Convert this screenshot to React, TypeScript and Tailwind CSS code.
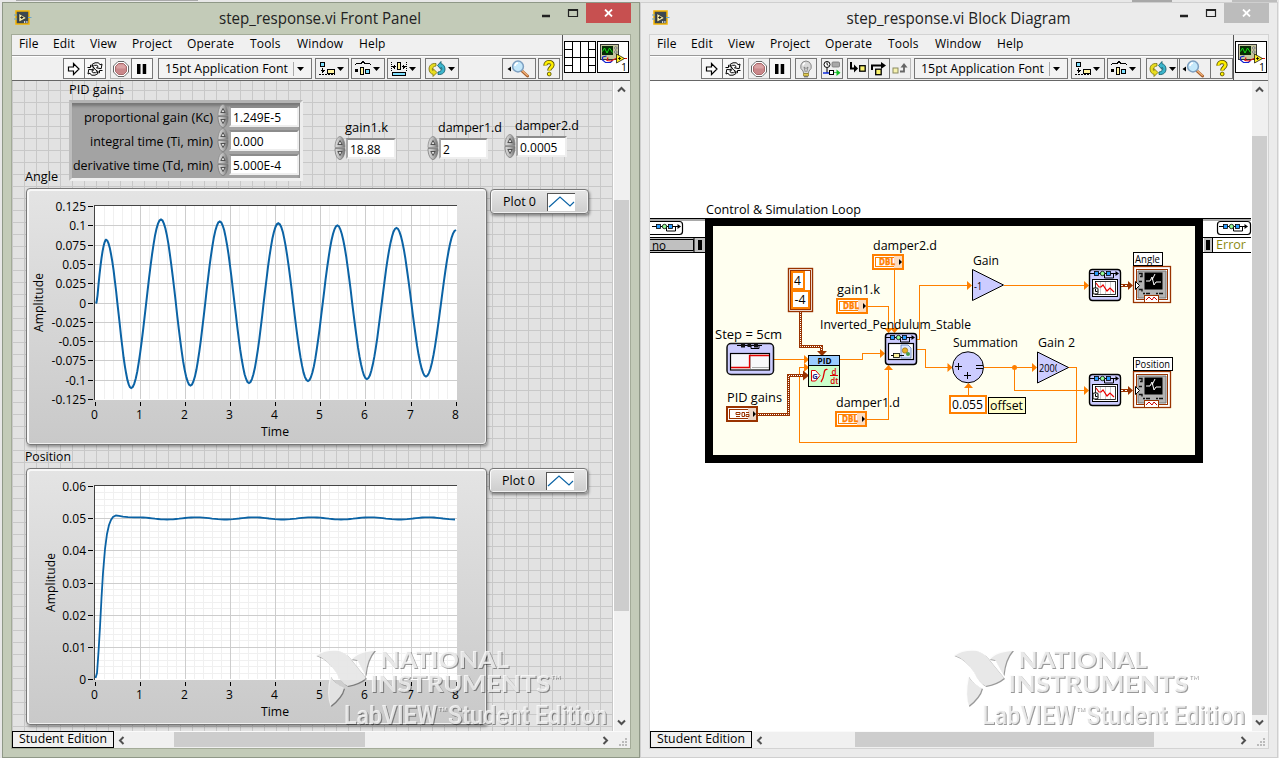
import React from "react";

type P = { children?: React.ReactNode };

function Label({ x, y, w, size = 12, fill = "#000", bold = false, children }: { x: number; y: number; w?: number; size?: number; fill?: string; bold?: boolean; children: string }) {
  return (
    <text x={x} y={y} fontSize={size} fill={fill} fontWeight={bold ? 700 : 400} textLength={w} lengthAdjust="spacingAndGlyphs">
      {children}
    </text>
  );
}

/* ---------- toolbar icons ---------- */

const RunIcon = () => (
  <svg width="14" height="14" viewBox="0 0 14 14">
    <path d="M1.500 5h5V1.500L12 7l-5.500 5.500V9h-5z" fill="#fff" stroke="#000" strokeWidth="1.200" />
  </svg>
);

const RunContIcon = () => (
  <svg width="18" height="14" viewBox="0 0 18 14" className="shrink-0">
    <path d="M6 2.500 9 .8h3.500l1.500 2 2-.8-.8 4.700-4.700-.9 1.700-1.300-1.400-1.200H8.500L7 4.300z" fill="#fff" stroke="#000" />
    <path d="M12 11.500 9 13.200H5.500l-1.500-2-2 .8.8-4.700 4.700.9-1.700 1.300 1.400 1.200h2.300L11 9.700z" fill="#fff" stroke="#000" />
    <path d="M1.500 5.500h3V3.200L9 6.700 5.500 7.500M16.500 8.500h-3v2.300L9 7.300" fill="none" stroke="#000" />
  </svg>
);

const AbortIcon = () => (
  <svg width="16" height="16" viewBox="0 0 16 16" className="shrink-0">
    <path d="M5 .5h6L15.500 5v6L11 15.500H5L.5 11V5z" fill="#fff" stroke="#666" />
    <path d="M5.500 2.500h5l3 3v5l-3 3h-5l-3-3v-5z" fill="#c9878a" stroke="#a86a6c" />
    <path d="M5.500 3.500h5l2 2v2h-9v-2z" fill="#dba3a4" />
  </svg>
);

const PauseIcon = () => (
  <svg width="12" height="12" viewBox="0 0 12 12">
    <path d="M1 1h3.500v10H1zM6.700 1h3.500v10H6.700z" fill="#000" />
  </svg>
);

const Caret = () => (
  <svg width="7" height="4" viewBox="0 0 7 4" className="shrink-0">
    <path d="M0 0h7L3.500 4z" fill="#000" />
  </svg>
);

const AlignIcon = () => (
  <svg width="16" height="15" viewBox="0 0 16 15" shapeRendering="crispEdges" className="shrink-0">
    <rect x="1.500" y="1.500" width="4" height="4" fill="#7fe0ff" stroke="#000" />
    <path d="M3.500 7v5M1.500 9.500h4M2.500 10.500h2" stroke="#000" />
    <path d="M0 13.500h16" stroke="#000" strokeDasharray="2 1" />
    <rect x="8.500" y="8.500" width="7" height="4" fill="#fff3a0" stroke="#000" />
  </svg>
);

const DistributeIcon = () => (
  <svg width="16" height="15" viewBox="0 0 16 15" shapeRendering="crispEdges" className="shrink-0">
    <path d="M1 2.500h5l2-2 2 2h5M0.500 4V2.500M15.500 4V2.500" fill="none" stroke="#000" />
    <rect x="0" y="8" width="3" height="3" fill="#000" />
    <rect x="5.500" y="6.500" width="3" height="7" fill="#fff3a0" stroke="#000" />
    <rect x="10.500" y="8.500" width="4" height="4" fill="#7fe0ff" stroke="#000" />
  </svg>
);

const ResizeIcon = () => (
  <svg width="16" height="15" viewBox="0 0 16 15" shapeRendering="crispEdges" className="shrink-0">
    <path d="M.5 1v10M15.500 1v10" stroke="#000" strokeDasharray="1 1" />
    <path d="M1 5.500h4M11 5.500h4M2.500 4.500v2M3.500 3.500v4M13.500 4.500v2M12.500 3.500v4" stroke="#000" />
    <rect x="6.500" y="1.500" width="3" height="7" fill="#fff3a0" stroke="#000" />
    <rect x="1.500" y="11.500" width="13" height="3" fill="#7fe0ff" stroke="#000" />
  </svg>
);

const ReorderIcon = () => (
  <svg width="18" height="16" viewBox="0 0 18 16" className="-ml-[1px] shrink-0">
    <path d="M8 2.500C3 2 1 5 1 8s2 5 4 5.300V15.500l4-4-4-4v2.200C3.800 9 4 5.500 8 5z" fill="#e8dc20" stroke="#77700a" strokeWidth=".8" />
    <path d="M10 13.500c5 .5 7-2.500 7-5.500s-2-5-4-5.300V.5L9.500 4.500l3.500 4V6.300c1.500.7 1 4.200-3 4.700z" fill="#3cb5cc" stroke="#0b5566" strokeWidth=".8" />
  </svg>
);

const SearchIcon = () => (
  <svg width="23" height="18" viewBox="0 0 23 18" className="-ml-[2px]">
    <path d="M4 6.500v5L.5 9z" fill="#000" />
    <path d="M14.500 10.500 20.500 16" stroke="#a8602c" strokeWidth="3" strokeLinecap="round" />
    <path d="M14.500 10 20.300 15.300" stroke="#f2b27a" strokeWidth="1.300" strokeLinecap="round" />
    <circle cx="11" cy="6.500" r="5.400" fill="#c4e8fb" stroke="#7d9fc0" strokeWidth="1.500" />
    <path d="M8 6a3.200 3.200 0 0 1 3-3" stroke="#fff" strokeWidth="1.600" fill="none" />
  </svg>
);

const HelpIcon = () => (
  <svg width="14" height="17" viewBox="0 0 14 17">
    <path d="M3.500 5.500C3 1 10.800 1 10.500 5c-.3 2.500-3.300 2.800-3.300 5.500" fill="none" stroke="#5c5500" strokeWidth="4.200" />
    <path d="M3.500 5.500C3 1 10.800 1 10.500 5c-.3 2.500-3.300 2.800-3.300 5.500" fill="none" stroke="#fff000" strokeWidth="2.400" />
    <circle cx="7.200" cy="14" r="1.900" fill="#fff000" stroke="#5c5500" strokeWidth=".9" />
  </svg>
);

const BulbIcon = () => (
  <svg width="16" height="18" viewBox="0 0 16 18">
    <path d="M8 1a5.500 5.500 0 0 0-3 10l.7 2.500h4.600L11 11A5.500 5.500 0 0 0 8 1z" fill="#d8d8d8" stroke="#888" />
    <path d="M6 7l1.300 5M10 7l-1.300 5M6 7l2 1.500L10 7" fill="none" stroke="#777" strokeWidth=".8" />
    <path d="M5 5.500A3 3 0 0 1 7 3" stroke="#fff" strokeWidth="1.500" fill="none" />
    <path d="M5.500 13.500h5v2.500h-5z" fill="#e2cb54" stroke="#8a7a20" strokeWidth=".7" />
    <path d="M6 16.800h4" stroke="#555" />
  </svg>
);

const RetainIcon = () => (
  <svg width="18" height="17" viewBox="0 0 18 17" className="shrink-0">
    <circle cx="4" cy="4.500" r="3" fill="#fff" stroke="#000" />
    <path d="M4 2.500v2l1.300.8M4 8v5" stroke="#000" fill="none" />
    <rect x="9" y="2" width="7.500" height="5" rx="1" fill="#a9a9a9" stroke="#777" strokeWidth=".8" />
    <path d="M0 13h7" stroke="#0020e0" strokeWidth="1.400" />
    <rect x="6.500" y="10.500" width="4" height="4" fill="#fff" stroke="#000" />
    <path d="M11 12.300h2.500V9.500l4 3.200-4 3.300V13H11z" fill="#0fbf20" />
  </svg>
);

const StepIntoIcon = () => (
  <svg width="18" height="13" viewBox="0 0 18 13" className="shrink-0">
    <path d="M2 0v6.500h4" stroke="#000" strokeWidth="2" fill="none" />
    <path d="M5 2.500v8L9 6.500z" fill="#000" />
    <rect x="10.700" y="3.700" width="5.500" height="5.500" fill="#fbf36e" stroke="#000" strokeWidth="1.300" />
  </svg>
);
const StepOverIcon = () => (
  <svg width="16" height="14" viewBox="0 0 16 14">
    <path d="M1 8V3.500h10" stroke="#000" strokeWidth="2" fill="none" />
    <path d="M10 0v7l5-3.500z" fill="#000" />
    <rect x="4.700" y="7.200" width="5.500" height="5.500" fill="#fbf36e" stroke="#000" strokeWidth="1.300" />
  </svg>
);
const StepOutIcon = () => (
  <svg width="16" height="13" viewBox="0 0 16 13">
    <rect x="1" y="6" width="5" height="5" fill="#f6f2b0" stroke="#8a8a60" />
    <path d="M8 9.500h4V5" stroke="#666" strokeWidth="1.800" fill="none" />
    <path d="M8.500 5.500h7L12 1z" fill="#666" />
  </svg>
);

const AppIcon = () => (
  <svg width="18" height="16" viewBox="0 0 18 16" className="shrink-0">
    <rect x="2" y="1" width="13" height="13" fill="#3d4850" stroke="#f5b400" strokeWidth="1.500" />
    <path d="M0 5h3M0 9h3M14 7.500h3.500" stroke="#6aa7c8" />
    <path d="M5 3.500v8.500l7.500-4z" fill="#f7efb0" stroke="#222" strokeWidth=".6" />
    <path d="M6.300 7.500h3M7.800 6v3" stroke="#222" />
    <path d="M10 12h1.200M12.300 12h1.200" stroke="#fff" strokeWidth="1.500" />
  </svg>
);

const ConnectorPane = () => (
  <svg width="32" height="32" viewBox="0 0 32 32" shapeRendering="crispEdges">
    <rect x=".5" y=".5" width="31" height="31" fill="#fff" stroke="#000" />
    <path d="M8.500 0v32M16.500 0v32M24.500 0v32M0 8.500h8M24 8.500h8M0 16.500h32M0 24.500h8M24 24.500h8" stroke="#000" />
  </svg>
);

const ViIcon = () => (
  <svg width="32" height="32" viewBox="0 0 32 32">
    <rect x=".5" y=".5" width="31" height="31" fill="#fff" stroke="#000" />
    <rect x="3.500" y="3.500" width="18" height="15" fill="#c6c6a0" stroke="#333" />
    <rect x="5" y="5" width="11" height="9" fill="#062b06" />
    <path d="M5.500 10.500 7.500 7l2.500 5L12.500 7l3 4.500" stroke="#15e015" fill="none" />
    <circle cx="18.800" cy="7" r="1.200" fill="#eee" stroke="#333" strokeWidth=".6" />
    <circle cx="18.800" cy="11" r="1.200" fill="#eee" stroke="#333" strokeWidth=".6" />
    <path d="M5.500 16v3l3 2.500h5l2-2M5.500 16l4-1" stroke="#1020d0" fill="none" strokeWidth="1.200" />
    <path d="M11 16.500l-1 3 4 .5 5-2.500h11" stroke="#e01010" fill="none" strokeWidth="1.200" />
    <path d="M19.500 13v9l8-4.500z" fill="#ffee22" stroke="#000" strokeWidth=".7" />
    <path d="M21 17.500h3M22.500 16v3" stroke="#000" strokeWidth=".8" />
    <text x="24" y="29.500" fontSize="10.500">1</text>
  </svg>
);

/* ---------- window chrome ---------- */

const btn = "flex h-[21px] shrink-0 items-center justify-center border border-[#777]";

function FontBox() {
  return (
    <div className="flex h-[21px] w-[154px] shrink-0 items-center border border-[#777] bg-[#f3f3f3]">
      <svg width="134" height="19" className="shrink-0">
        <Label x={6} y={13.5} w={123}>15pt Application Font</Label>
      </svg>
      <div className="h-[14px] w-[4px] border-l border-[#aaa]" />
      <Caret />
    </div>
  );
}

function DropBtn({ children, cls = "" }: P & { cls?: string }) {
  return <div className={`flex h-[21px] w-[34px] shrink-0 items-center gap-[2px] border border-[#777] pl-[3px] ${cls}`}>{children}<Caret /></div>;
}

function RunGroup({ cls }: { cls: string }) {
  return (
    <>
      <div className={`${btn} w-[22px] bg-[#f8f8f8] ${cls}`}><RunIcon /></div>
      <div className={`${btn} -ml-px w-[22px] bg-[#f8f8f8]`}><RunContIcon /></div>
      <div className="ml-[4px] flex h-[21px] w-[22px] shrink-0 items-center justify-center border border-r-0 border-[#b5b5b5] pr-[2px]"><AbortIcon /></div>
      <div className={`${btn} -ml-px w-[22px] bg-[#f8f8f8]`}><PauseIcon /></div>
    </>
  );
}

function Menu() {
  return (
    <div className="flex h-[20px] pl-[7px] text-[12px] leading-[18px] tracking-[0.15px]">
      <span className="w-[34px]">File</span>
      <span className="w-[37px]">Edit</span>
      <span className="w-[42px]">View</span>
      <span className="w-[55px]">Project</span>
      <span className="w-[63px]">Operate</span>
      <span className="w-[47px]">Tools</span>
      <span className="w-[62px]">Window</span>
      <span>Help</span>
    </div>
  );
}

function Chevron({ d }: { d: string }) {
  return <svg width="9" height="9" viewBox="0 0 9 9"><path d={d} fill="none" stroke="#505050" strokeWidth="2" /></svg>;
}

type WinProps = {
  title: string; titleW: number; active: boolean; toolbar: React.ReactNode; icons: React.ReactNode; iconCls: string;
  vTop: string; hPos: string; children: React.ReactNode;
};

function Win({ title, titleW, active, toolbar, icons, iconCls, vTop, hPos, children }: WinProps) {
  return (
    <section className={`h-[756px] w-[638px] shrink-0 border ${active ? "border-[#8f9887] bg-[#c3cbb8]" : "border-[#cfcfcf] bg-[#ebebeb]"}`}>
      <header className="flex h-[31px] pl-[11px]">
        <div className="mt-[7px]"><AppIcon /></div>
        <svg width="478" height="31" className="shrink-0">
          <text x={active ? 288 : 288.5} y="21" textAnchor="middle" fontSize="15.500" fill="#222" textLength={titleW} lengthAdjust="spacingAndGlyphs">{title}</text>
        </svg>
        <svg width="76" height="20" className="-ml-[2px] shrink-0">
          <path d="M34 13h8" stroke="#222" strokeWidth="2.500" />
          <path d="M60.500 6.500h9v7h-9z M60 7.500h10" fill="none" stroke="#222" strokeWidth="1.200" />
        </svg>
        <div className={`ml-[2px] flex h-[20px] w-[45px] items-center justify-center ${active ? "bg-[#c75050]" : "bg-[#bcbcbc]"}`}>
          <svg width="9" height="8" viewBox="0 0 9 8"><path d="M1 .5l7 7M8 .5l-7 7" stroke="#fff" strokeWidth="1.800" /></svg>
        </div>
      </header>
      <div className={`ml-[8px] flex h-[715px] w-[620px] flex-col border bg-[#f0f0f0] ${active ? "border-[#a3ab98]" : "border-[#d3d3d3]"}`}>
        <div className="flex h-[46px] border-b border-[#666]">
          <div className="flex min-w-0 flex-1 flex-col">
            <Menu />
            <div className="h-[2px] border-t border-[#999] bg-white" />
            <div className="flex h-[23px] items-center">{toolbar}</div>
          </div>
          <div className={`flex shrink-0 items-start border-l border-[#555] pt-[6px] ${iconCls}`}>{icons}</div>
        </div>
        <div className="flex h-[650px]">
          {children}
          <div className="relative flex w-[16px] flex-col items-center justify-between bg-[#f0f0f0] py-[4px] pr-[2px]">
            <Chevron d="M1 6.500l3.500-3.500L8 6.500" />
            <div className={`absolute left-0 w-[15px] bg-[#cdcdcd] ${vTop}`} />
            <Chevron d="M1 2.500l3.500 3.500L8 2.500" />
          </div>
        </div>
        <div className="flex h-[17px] border-t border-[#fafafa]">
          <div className="-mt-px flex h-[17px] w-[102px] items-center border border-black">
            <svg width="100" height="15" className="overflow-visible"><Label x={6} y={11} w={88}>Student Edition</Label></svg>
          </div>
          <div className="relative flex flex-1 items-center justify-between pl-[3px] pr-[20px]">
            <Chevron d="M6.500 1L3 4.500 6.500 8" />
            <div className={`absolute top-0 h-[15px] bg-[#cdcdcd] ${hPos}`} />
            <Chevron d="M2.500 1L6 4.500 2.500 8" />
            <svg width="9" height="9" className="absolute bottom-[1px] right-[2px]">
              <path d="M6 0h2v2H6zM3 3h2v2H3zM6 3h2v2H6zM0 6h2v2H0zM3 6h2v2H3zM6 6h2v2H6z" fill="#bbb" />
            </svg>
          </div>
        </div>
      </div>
    </section>
  );
}

/* ---------- watermark ---------- */

function Watermark({ cls }: { cls: string }) {
  return (
    <svg width="298" height="86" viewBox="316 645 298 86" className={`absolute drop-shadow-[1px_1.5px_0.7px_rgba(0,0,0,0.5)] ${cls}`}>
      <g fill="#fbfbfb" fillOpacity=".8">
        <path d="M316.500 655Q324 649 339 650Q348 653 354 662L367 678Q360 684 348.500 686Q341 682 336 671Q328 659 316.500 655Z" />
        <path d="M331 676Q336 684 345 688Q343 697 331.500 706Q327 695 331 676Z" />
        <path d="M352 659Q357 651 376 650Q368 659 366.500 675Q361 666 358 660Z" />
        <text x="381" y="668" fontSize="23.500" fontWeight="900" fontFamily="Lato" textLength="129" lengthAdjust="spacingAndGlyphs">NATIONAL</text>
        <text x="371" y="692" fontSize="23.500" fontWeight="900" fontFamily="Lato" textLength="180" lengthAdjust="spacingAndGlyphs">INSTRUMENTS</text>
        <text x="552" y="679" fontSize="6" fontFamily="Lato">TM</text>
        <text x="345" y="724" fontSize="25" fontWeight="600" fontFamily="Roboto" textLength="93" lengthAdjust="spacingAndGlyphs">LabVIEW</text>
        <text x="439" y="711" fontSize="6" fontFamily="Roboto">TM</text>
        <text x="449" y="724" fontSize="25" fontWeight="600" fontFamily="Roboto" textLength="159" lengthAdjust="spacingAndGlyphs">Student Edition</text>
      </g>
    </svg>
  );
}

/* ---------- front panel ---------- */

const X = (t: number) => Math.floor(95.3 + 45.1 * t) + 0.5;

const extrema: [number, number][] = [
  [106, 239.8], [131.2, 388], [161, 219.5], [190.5, 385.5], [219.8, 221.5], [249, 383], [278.3, 223.3], [308, 381],
  [337.4, 225.5], [366.9, 379], [396.5, 228], [426, 376.5], [456, 230],
];

function wave() {
  const pts = ["95.5,303", "96.5,302.5"];
  for (let x = 97.5; x < 106; x += 1) {
    const u = (x - 97) / 9;
    pts.push(`${x},${(301.5 - 61.7 * (1 - Math.pow(1 - u, 1.75))).toFixed(1)}`);
  }
  for (let i = 0; i < extrema.length - 1; i++) {
    const [x0, y0] = extrema[i];
    const [x1, y1] = extrema[i + 1];
    for (let k = 0; k < 20; k++) {
      const u = k / 20;
      pts.push(`${(x0 + (x1 - x0) * u).toFixed(1)},${(y0 + ((y1 - y0) * (1 - Math.cos(Math.PI * u))) / 2).toFixed(1)}`);
    }
  }
  pts.push("456,230");
  return pts.join(" ");
}

function settle() {
  const pts = ["95.5,678", "97,673", "98.5,652", "100,627", "101.5,598", "103,573", "105,549", "107,534", "109,525", "111,520", "113,517", "116,515.5", "119,515.8", "123,516.7", "128,517.2"];
  for (let x = 134; x <= 456; x += 3) {
    pts.push(`${x},${(518.4 - 1.1 * Math.cos(((x - 138) / 58) * 2 * Math.PI)).toFixed(1)}`);
  }
  return pts.join(" ");
}

function Graph({ top, h, plotTop, plotBottom, labels, minor, points, ampX, cls }: {
  top: number; h: number; plotTop: number; plotBottom: number; labels: string[]; minor: boolean; points: string; ampX: number; cls: string;
}) {
  const n = labels.length - 1;
  const Y = (i: number) => Math.round(plotTop + ((plotBottom - plotTop) * i) / n) + 0.5;
  const mid = (plotTop + plotBottom) / 2;
  const xs = [0, 1, 2, 3, 4, 5, 6, 7, 8];
  const minorY: number[] = [];
  if (minor) for (let i = 0; i < n * 5; i++) if (i % 5) minorY.push(plotTop + ((plotBottom - plotTop) * i) / (n * 5));
  return (
    <div className={`absolute left-[14px] w-[461px] rounded-[4px] border border-[#777] bg-linear-to-b from-[#e4e4e4] to-[#c9c9c9] shadow-[inset_1px_1px_0_1px_#f8f8f8,inset_-1px_-1px_0_0_#f0f0f0,1px_2px_3px_rgba(0,0,0,.35)] ${cls}`}>
      <svg width="459" height={h - 2} viewBox={`27 ${top + 1} 459 ${h - 2}`}>
        <rect x="95" y={plotTop} width="362" height={plotBottom - plotTop + 1} fill="#fff" />
        <g shapeRendering="crispEdges">
          {xs.slice(0, 8).flatMap((t) => [0.2, 0.4, 0.6, 0.8].map((d) => <path key={t + d} d={`M${X(t + d)} ${plotTop}V${plotBottom}`} stroke="#f0f0f0" />))}
          {minorY.map((y) => <path key={y} d={`M95 ${Math.round(y) + 0.5}H457`} stroke="#f0f0f0" />)}
          {xs.slice(1, 8).map((t) => <path key={t} d={`M${X(t)} ${plotTop}V${plotBottom}`} stroke="#cdcdcd" />)}
          {labels.slice(1, n).map((l, i) => <path key={l} d={`M95 ${Y(i + 1)}H457`} stroke="#cdcdcd" />)}
          <path d={`M94.500 ${plotBottom + 1}V${plotTop - 0.5}H457`} stroke="#444" fill="none" />
          {labels.map((l, i) => <path key={l} d={`M88 ${Y(i)}H93`} stroke="#000" />)}
          {xs.map((t) => <path key={t} d={`M${X(t)} ${plotBottom + 3}V${plotBottom + 7}`} stroke="#000" />)}
        </g>
        {labels.map((l, i) => <text key={l} x="86" y={Y(i) + 4} fontSize="12" textAnchor="end">{l}</text>)}
        {xs.map((t) => <text key={t} x={X(t) - 1} y={plotBottom + 20} fontSize="12" textAnchor="middle">{t}</text>)}
        <Label x={261} y={plotBottom + 37} w={28}>Time</Label>
        <text transform={`translate(${ampX} ${mid}) rotate(-90)`} fontSize="12" textAnchor="middle" textLength="59">Amplitude</text>
        <polyline points={points} fill="none" stroke="#0b63a5" strokeWidth={minor ? 1.8 : 2} />
      </svg>
    </div>
  );
}

function Legend({ cls }: { cls: string }) {
  return (
    <div className={`absolute flex h-[25px] w-[99px] items-center rounded-[4px] border border-[#777] bg-linear-to-b from-[#e6e6e6] to-[#cdcdcd] pl-[12px] text-[12px] shadow-[inset_1px_1px_0_0_#fafafa,inset_-1px_-1px_0_0_#f0f0f0,1px_2px_3px_rgba(0,0,0,.4)] ${cls}`}>
      <svg width="44" height="18" className="overflow-visible"><Label x={0} y={12.5} w={33}>Plot 0</Label></svg>
      <svg width="28" height="18" className="border-l border-t border-[#555] bg-white">
        <path d="M1 13L12 3l10 9 4-4" fill="none" stroke="#0b63a5" strokeWidth="1.200" />
      </svg>
    </div>
  );
}

function Spinner() {
  return (
    <svg width="12" height="24" viewBox="0 0 12 24" className="shrink-0">
      <defs>
        <linearGradient id="knob" x1="0" x2="1"><stop offset="0" stopColor="#dedede" /><stop offset=".5" stopColor="#b8b8b8" /><stop offset="1" stopColor="#6c6c6c" /></linearGradient>
      </defs>
      <path d="M1 11.500C1 5 3.500.5 6 .5s5 4.500 5 11z" fill="url(#knob)" stroke="#8a8a8a" strokeWidth=".8" />
      <path d="M1 12.500C1 19 3.500 23.500 6 23.500s5-4.500 5-11z" fill="url(#knob)" stroke="#777" strokeWidth=".8" />
      <path d="M3.800 8.500L6 4.500l2.200 4zM3.800 15.500l2.200 4 2.200-4z" fill="#ddd" stroke="#444" strokeWidth=".9" />
    </svg>
  );
}

function Numeric({ value, cls, w }: { value: string; cls: string; w: string }) {
  return (
    <div className={`absolute flex items-center ${cls}`}>
      <Spinner />
      <div className={`mt-px flex h-[21px] items-center border-2 border-b-[#eee] border-l-[#a8a8a8] border-r-[#eee] border-t-[#8c8c8c] bg-white pl-[2px] text-[12px] leading-[14px] ${w}`}>
        <span className="relative top-px">{value}</span>
      </div>
    </div>
  );
}

function FrontPanel() {
  return (
    <div className="relative h-[650px] w-[602px] overflow-hidden border-r border-white bg-[#e2e2e2] bg-[linear-gradient(to_right,#c8c8c8_1px,transparent_1px),linear-gradient(to_bottom,#c8c8c8_1px,transparent_1px)] bg-[length:12px_12px] bg-[position:0_9px]">
      <div className="absolute left-[57px] top-[19px] h-[81px] w-[234px] border-[3px] border-b-[#efefef] border-l-[#bdbdbd] border-r-[#ededed] border-t-[#b4b4b4] bg-[#a3a3a3] shadow-[inset_-1px_4px_3px_-1px_#777]" />
      <Numeric value="1.249E-5" cls="left-[205px] top-[23px]" w="w-[70px]" />
      <Numeric value="0.000" cls="left-[205px] top-[47px]" w="w-[70px]" />
      <Numeric value="5.000E-4" cls="left-[205px] top-[71px]" w="w-[70px]" />
      <Numeric value="18.88" cls="left-[322px] top-[55px]" w="w-[50px]" />
      <Numeric value="2" cls="left-[415px] top-[55px]" w="w-[49px]" />
      <Numeric value="0.0005" cls="left-[492px] top-[53px]" w="w-[51px]" />
      <svg width="602" height="400" viewBox="12 81 602 400" className="absolute left-0 top-0">
        <Label x={69} y={94} w={55}>PID gains</Label>
        <Label x={84} y={122} w={129}>proportional gain (Kc)</Label>
        <Label x={90} y={146} w={123}>integral time (Ti, min)</Label>
        <Label x={73} y={170} w={140}>derivative time (Td, min)</Label>
        <Label x={345} y={132} w={43}>gain1.k</Label>
        <Label x={438} y={132} w={64}>damper1.d</Label>
        <Label x={515} y={130} w={64}>damper2.d</Label>
        <Label x={25} y={181} w={33}>Angle</Label>
        <Label x={25} y={461} w={46}>Position</Label>
      </svg>
      <Graph top={188} h={257} plotTop={206} plotBottom={399} minor={false} points={wave()} ampX={43} cls="top-[107px] h-[257px]"
        labels={["0.125", "0.1", "0.075", "0.05", "0.025", "0", "-0.025", "-0.05", "-0.075", "-0.1", "-0.125"]} />
      <Graph top={468} h={257} plotTop={486} plotBottom={679} minor points={settle()} ampX={55} cls="top-[387px] h-[257px]"
        labels={["0.06", "0.05", "0.04", "0.03", "0.02", "0.01", "0"]} />
      <Legend cls="left-[478px] top-[108px]" />
      <Legend cls="left-[477px] top-[387px]" />
      <Watermark cls="left-[303px] top-[564px]" />
    </div>
  );
}

/* ---------- block diagram ---------- */

const OR = "#ff8000";
const BR = "#993300";

function Terminal({ x, y }: { x: number; y: number }) {
  return (
    <g>
      <rect x={x + 1} y={y + 1} width="30" height="14" fill="#fff" stroke={OR} strokeWidth="2" />
      <rect x={x + 3.5} y={y + 3.5} width="25" height="9" fill="#fff" stroke={OR} />
      <rect x={x + 22} y={y + 2} width="8" height="12" fill="#fbdcc0" />
      <text x={x + 7} y={y + 11} fontSize="8.500" fontWeight="700" fill={OR} stroke={OR} strokeWidth=".3" textLength="16" lengthAdjust="spacingAndGlyphs" fontFamily="DejaVu Sans">DBL</text>
      <path d={`M${x + 27} ${y + 5}v6l3-3z`} fill="#000" />
    </g>
  );
}

function LoopGlyph({ x, y }: { x: number; y: number }) {
  return (
    <g>
      <path d={`M${x + 1} ${y}h27M${x + 15.5} ${y}v4.500h9v-4.500`} stroke="#000" fill="none" />
      <path d={`M${x + 26.5} ${y - 2.5}v5l3.500-2.500z`} fill="#000" />
      <rect x={x + 5.5} y={y - 2} width="4" height="4" fill="#2b9cff" stroke="#000" strokeWidth=".8" />
      <circle cx={x + 13.5} cy={y} r="2.200" fill="#9f9" stroke="#000" strokeWidth=".8" />
      <rect x={x + 17.5} y={y - 2} width="4" height="4" fill="#2b9cff" stroke="#000" strokeWidth=".8" />
    </g>
  );
}

function Scope({ y }: { y: number }) {
  return (
    <g>
      <rect x="1089.500" y={y + 0.5} width="31" height="31" rx="3" fill="#ccccff" stroke="#000" strokeWidth="1.400" />
      <LoopGlyph x={1089} y={y + 4.5} />
      <rect x="1092.500" y={y + 10.5} width="25" height="17" fill="#fff" stroke="#000" />
      <rect x="1095.500" y={y + 12.5} width="20" height="13" fill="#fff" stroke="#000" strokeWidth=".8" />
      <path d={`M1100.500 ${y + 13}v12M1105.500 ${y + 13}v12M1110.500 ${y + 13}v12`} stroke="#ccc" />
      <path d={`M1096 ${y + 14}l3 4 2 0 2-2 4 6 3-3 4 4`} stroke="#e00" fill="none" strokeWidth="1.200" />
      <rect x="1093" y={y + 19} width="5" height="6" rx="1" fill="#fff" stroke="#000" />
      <path d={`M1095.500 ${y + 20}v2.500h2`} stroke="#000" fill="none" />
      <path d={`M1121 ${y + 16.5}h8`} stroke={BR} strokeWidth="3" />
      <path d={`M1121 ${y + 16.5}h8`} stroke="#fff" strokeDasharray="2 2" />
      <path d={`M1128 ${y + 12}v9l5-4.500z`} fill={BR} />
      <g>
        <rect x="1133.500" y={y - 2.5} width="37" height="36" fill="#fff" stroke={BR} strokeWidth="1.300" />
        <rect x="1136.500" y={y + 0.5} width="31" height="30" fill="#fff" stroke={BR} />
        <path d={`M1138 ${y + 2}h28v27h-28z`} fill="#b4b4b4" stroke="#777" />
        <rect x="1144.500" y={y + 3.5} width="18" height="17" fill="#000" />
        <path d={`M1146 ${y + 12}h4l2-4 2 8 2-3h5M1155 ${y + 5}l-3 6`} stroke="#fff" fill="none" />
        <path d={`M1139 ${y + 4.5}h3v3h-2M1139 ${y + 12.5}h3M1139 ${y + 20.5}h3v2M1143 ${y + 24.5}h2M1146 ${y + 24.5}h4M1156 ${y + 24.5}h2M1159 ${y + 24.5}h4`} stroke="#111" fill="none" strokeWidth="1.400" />
        <path d={`M1135.500 ${y + 12.5}v8l4-4z`} fill="#fff" stroke="#000" />
        <rect x="1144.500" y={y + 26.5} width="14" height="7" fill="#fff" stroke={BR} />
        <path d={`M1146 ${y + 31}l3-3 3 3 2-3 3 3`} stroke="#c00" fill="none" />
      </g>
    </g>
  );
}

function Diagram() {
  return (
    <svg width="602" height="650" viewBox="650 81 602 650">
      <Label x={706} y={214} w={155}>Control &amp; Simulation Loop</Label>
      <rect x="705" y="218" width="498" height="245" fill="#000" />
      <rect x="713" y="226" width="482" height="229" fill="#fffff0" />

      {/* loop edge nodes */}
      <g>
        <path d="M650 218.500h55M1203 218.500h48" stroke="#000" />
        <path d="M650 220h55M1203 220h48" stroke="#a9a9a9" strokeWidth="2" />
        <rect x="640" y="221.500" width="42.500" height="13" rx="3" fill="#fff" stroke="#000" strokeWidth="1.200" />
        <LoopGlyph x={651} y={226.5} />
        <path d="M650 237h55v16h-55z" fill="#c0c0c0" />
        <path d="M650 237.500h55M650 252.500h55M694 238v14" stroke="#000" />
        <path d="M650 239.500h43.500v11h-43.500" fill="none" stroke="#000" />
        <rect x="698" y="240" width="4" height="10" fill="#000" />
        <Label x={652} y={250} w={14}>no</Label>
        <rect x="1217.500" y="221.500" width="33" height="13" rx="3" fill="#fff" stroke="#000" strokeWidth="1.200" />
        <LoopGlyph x={1218} y={226.5} />
        <path d="M1204 237h8v16h-8z" fill="#c0c0c0" />
        <path d="M1203 237.500h48M1203 252.500h48M1212.500 237v16" stroke="#000" />
        <rect x="1206" y="240" width="4" height="10" fill="#000" />
        <Label x={1216} y={249} w={30} fill="#8c8a10">Error</Label>
      </g>

      {/* wires */}
      <g fill="none" stroke={OR} strokeWidth="1" shapeRendering="crispEdges">
        <path d="M774 359.500H804M840 359.500H862.500V353.500H881M917 339.500H919.500V285.500H968M917 349.500H925.500V367.500H948" />
        <path d="M894.500 270V329M868 306.500H888.500V329M867 419.500H888.500V369" />
        <path d="M1004 285.500H1085M984 367.500H1033M1014.500 367.500V390.500H1085M1068 367.500H1076.500V442.500H799.500V367.500H804M968.500 396V388" />
      </g>
      <g fill={OR}>
        <path d="M804 355v9l5-4.500zM804 363v9l5-4.500zM880 349v9l5-4.500zM967 281v9l5-4.500zM947.500 363v9l5-4.500zM1084 281v9l5-4.500zM1084 386v9l5-4.500zM1032 363v9l5-4.500z" />
        <path d="M884 328h9l-4.500 5zM890 328h9l-4.500 5zM884 370h9l-4.500-5zM964 388h9l-4.500-5z" />
        <circle cx="1014.500" cy="367.500" r="2.500" />
      </g>
      <g fill="none">
        <path d="M800.500 312V346.500H821.500V352M758 414.500H788.500V375.500H803" stroke={BR} strokeWidth="3" />
        <path d="M800.500 312V346.500H821.500V352M758 414.500H788.500V375.500H803" stroke="#fff" strokeDasharray="1 1" />
        <path d="M817 351h10l-5 5zM803 370.500v10l6-5z" fill={BR} />
      </g>

      {/* array constant */}
      <rect x="788.500" y="268.500" width="24" height="43" fill="#fff" stroke={BR} strokeWidth="1.400" />
      <rect x="790.500" y="270.500" width="20" height="39" fill="#fff" stroke={BR} />
      <rect x="792" y="272" width="12" height="17" fill="#fff" stroke={OR} strokeWidth="2" />
      <rect x="792" y="291" width="17" height="17" fill="#fff" stroke={OR} strokeWidth="2" />
      <Label x={794} y={285}>4</Label>
      <Label x={794.5} y={304} w={11}>-4</Label>

      {/* step source */}
      <Label x={715} y={339} w={67}>Step = 5cm</Label>
      <rect x="727" y="343.500" width="46.500" height="31" rx="4" fill="#ccccff" stroke="#111" strokeWidth="1.500" />
      <path d="M737 345.500h25M751 346v2.500h8v-2.500" stroke="#000" fill="none" />
      <path d="M741 344h4v3.500h-4zM747.500 344h3.500v3h-3.500zM754 344h4v3.500h-4z" fill="#111" />
      <rect x="730.500" y="353.500" width="39" height="16.500" fill="#f8f8fa" stroke="#000" strokeWidth="1.200" />
      <path d="M750.500 354v15M752 367.500h17" stroke="#aaa" />
      <path d="M731 367.500h18.500V355.500H769" fill="none" stroke="#e00000" strokeWidth="1.300" />

      {/* pid gains terminal */}
      <Label x={727} y={402} w={55}>PID gains</Label>
      <rect x="727" y="407" width="30" height="14" fill="#fff" stroke={BR} strokeWidth="2" />
      <rect x="729.500" y="409.500" width="25" height="9" fill="#fff" stroke={BR} />
      <rect x="748" y="408" width="8" height="12" fill="#ecd6c8" />
      <path d="M736 412.500h4v2h-4zM736 416.500h4M742 412.500h2.500v4h-2.500zM746 414.500h3v2h-3zM746 412.500h3" fill="none" stroke={BR} />
      <path d="M753 411v6l3-3z" fill="#000" />

      {/* pid */}
      <rect x="808.500" y="355.500" width="31" height="31" fill="#ccffcc" stroke="#000" />
      <rect x="809" y="356" width="30" height="9" fill="#99ccff" />
      <path d="M808 365.500h32" stroke="#000" />
      <Label x={817.5} y={364} w={14} size={8.5} bold>PID</Label>
      <path d="M811.500 370.500h4l4.500 5-4.500 5.500h-4z" fill="#fff" stroke="#d00" />
      <text x="812.300" y="378.500" fontSize="7.500" fill="#228" fontWeight="700">G</text>
      <path d="M827.500 369.500q-3-1-3.500 4t-3 8.500" fill="none" stroke="#d00" strokeWidth="1.300" />
      <path d="M830 375.500h8" stroke="#d00" />
      <text x="831.500" y="374.500" fontSize="8" fontWeight="600" fill="#d00">d</text>
      <text x="830.300" y="383.500" fontSize="8" fontWeight="600" fill="#d00">dt</text>

      {/* controls */}
      <Label x={873} y={250} w={64}>damper2.d</Label>
      <Terminal x={872} y={254} />
      <Label x={837} y={294} w={43}>gain1.k</Label>
      <Terminal x={836} y={298} />
      <Label x={836} y={407} w={64}>damper1.d</Label>
      <Terminal x={835} y={411} />

      {/* pendulum model */}
      <rect x="885.500" y="333.500" width="31" height="31" rx="3" fill="#ccccff" stroke="#000" strokeWidth="1.500" />
      <LoopGlyph x={885} y={337.5} />
      <rect x="888.500" y="343.500" width="25" height="16" fill="#fff" stroke="#000" strokeWidth="1.200" />
      <path d="M901 345h7l3 3v10h-10z" fill="#dce9ff" stroke="#5577bb" strokeWidth=".8" />
      <circle cx="905" cy="350.500" r="2.700" fill="#e8b020" stroke="#886010" strokeWidth=".6" />
      <circle cx="908" cy="354" r="2" fill="#48a048" />
      <path d="M891 355.500h13" stroke="#000" />
      <rect x="893.500" y="353.500" width="6" height="4" fill="#fdf5a0" stroke="#000" strokeWidth=".8" />
      <Label x={820} y={329} w={151}>Inverted_Pendulum_Stable</Label>

      {/* gain */}
      <Label x={973} y={265} w={26}>Gain</Label>
      <path d="M972.500 269.500v31l31-15.500z" fill="#ccccff" stroke="#000" />
      <Label x={974} y={289.5} w={8} size={10}>-1</Label>
      <Label x={1038} y={347} w={37}>Gain 2</Label>
      <path d="M1037.500 352v31l31-15.500z" fill="#ccccff" stroke="#000" />
      <svg x="1038" y="355" width="19" height="24">
        <Label x={1} y={16.5} w={21} size={10}>2000</Label>
      </svg>

      {/* summation */}
      <Label x={953} y={347} w={65}>Summation</Label>
      <circle cx="968" cy="367.300" r="15.500" fill="#ccccff" stroke="#000" />
      <path d="M955 366.500h7M958.500 363v7M964 375.500h7M967.500 372v7M976 365.500h7M976 368.500h7" stroke="#000" />
      <rect x="950" y="396" width="36" height="17" fill="#fff" stroke={OR} strokeWidth="2" />
      <Label x={952} y={409} w={31}>0.055</Label>
      <rect x="988.500" y="397.500" width="37" height="16" fill="#ffffcc" stroke="#000" />
      <Label x={990} y={410} w={33}>offset</Label>

      {/* indicators */}
      <Scope y={269} />
      <Scope y={374} />
      <rect x="1133.500" y="252.500" width="29" height="13" fill="#fff" stroke="#000" />
      <Label x={1135} y={263} w={25} size={10}>Angle</Label>
      <rect x="1133.500" y="357.500" width="39" height="13" fill="#fff" stroke="#000" />
      <Label x={1135} y={368} w={35} size={10}>Position</Label>
    </svg>
  );
}

export default function App() {
  return (
    <main className="flex h-[758px] w-[1279px] flex-col overflow-hidden bg-[#e8e8e8] text-black [font-family:'Open_Sans','Noto_Sans',sans-serif]">
      <div className="flex h-[2px] shrink-0">
        <div className="ml-[16px] h-px w-[182px] bg-[#aaa]" />
        <div className="ml-[934px] w-[40px] bg-[#a8a8a8]" />
        <div className="ml-[60px] w-[45px] bg-[#bdbdbd]" />
      </div>
      <div className="flex pl-[2px]">
        <Win
          title="step_response.vi Front Panel" titleW={202} active iconCls="w-[68px] gap-[1px] pl-[1px]"
          vTop="top-[119px] h-[411px]" hPos="left-[60px] w-[191px]"
          icons={<><ConnectorPane /><ViIcon /></>}
          toolbar={
            <>
              <RunGroup cls="ml-[51px]" />
              <div className="w-[5px]" />
              <FontBox />
              <DropBtn cls="ml-[3px]"><AlignIcon /></DropBtn>
              <DropBtn cls="ml-[2px]"><DistributeIcon /></DropBtn>
              <DropBtn cls="ml-[2px]"><ResizeIcon /></DropBtn>
              <DropBtn cls="ml-[4px]"><ReorderIcon /></DropBtn>
              <div className={`${btn} ml-[43px] w-[34px]`}><SearchIcon /></div>
              <div className={`${btn} ml-[2px] w-[22px]`}><HelpIcon /></div>
            </>
          }
        >
          <FrontPanel />
        </Win>
        <Win
          title="step_response.vi Block Diagram" titleW={224} active={false} iconCls="w-[35px] pl-[1px]"
          vTop="top-[55px] h-[579px]" hPos="left-[103px] w-[299px]"
          icons={<ViIcon />}
          toolbar={
            <>
              <RunGroup cls="ml-[51px]" />
              <div className={`${btn} ml-[4px] w-[22px]`}><BulbIcon /></div>
              <div className={`${btn} ml-[4px] w-[22px]`}><RetainIcon /></div>
              <div className={`${btn} ml-[4px] w-[22px]`}><StepIntoIcon /></div>
              <div className={`${btn} -ml-px w-[22px]`}><StepOverIcon /></div>
              <div className="flex h-[21px] w-[21px] shrink-0 items-center justify-center border border-l-0 border-[#bbb]"><StepOutIcon /></div>
              <div className="w-[3px] shrink-0" />
              <FontBox />
              <DropBtn cls="ml-[3px]"><AlignIcon /></DropBtn>
              <DropBtn cls="ml-[2px]"><DistributeIcon /></DropBtn>
              <DropBtn cls="ml-[5px]"><ReorderIcon /></DropBtn>
              <div className={`${btn} -ml-[3px] w-[34px]`}><SearchIcon /></div>
              <div className={`${btn} -ml-px w-[23px]`}><HelpIcon /></div>
            </>
          }
        >
          <div className="relative h-[650px] w-[602px] overflow-hidden bg-white">
            <Diagram />
            <Watermark cls="left-[303px] top-[564px]" />
          </div>
        </Win>
      </div>
    </main>
  );
}
